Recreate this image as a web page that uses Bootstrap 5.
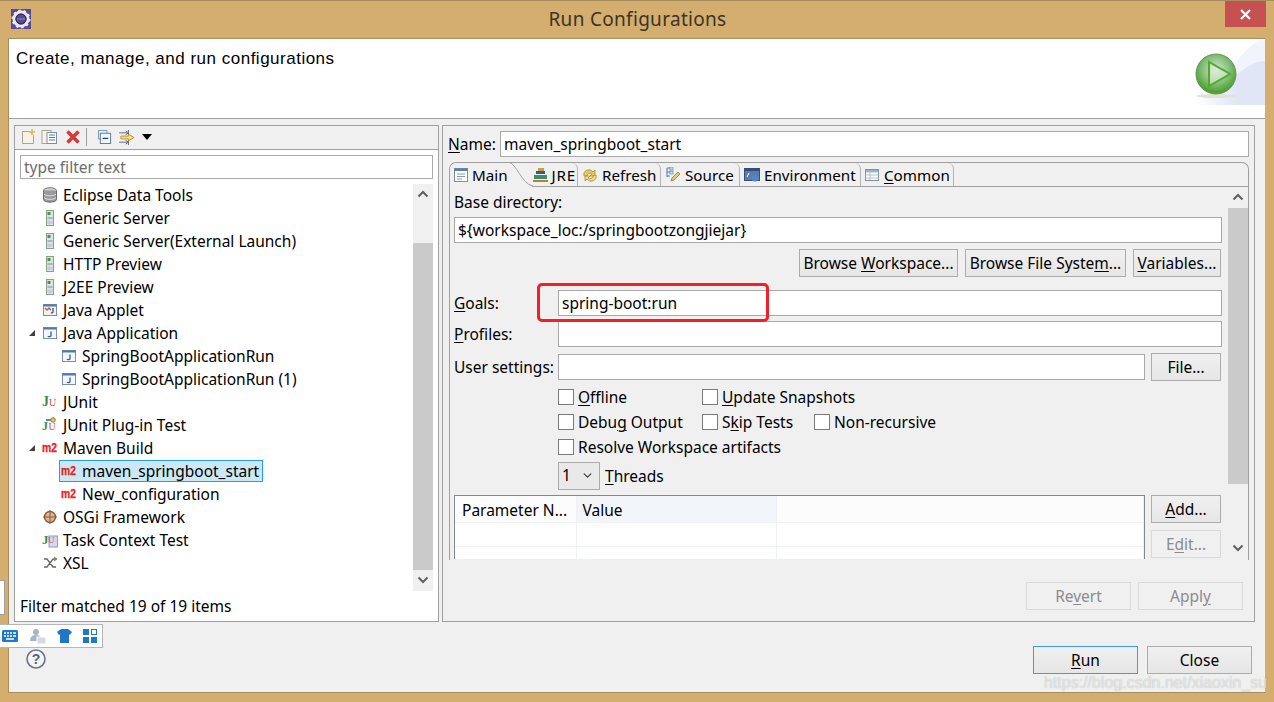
<!DOCTYPE html>
<html lang="en"><head><meta charset="utf-8"><title>Run Configurations</title>
<link href="https://cdn.jsdelivr.net/npm/bootstrap@5.3.0/dist/css/bootstrap.min.css" rel="stylesheet">
<style>
html,body{margin:0;height:702px;overflow:hidden}
body{font-family:"Noto Sans",sans-serif;font-size:15.5px;line-height:20px;color:#000;background:#d4ae6f;position:relative}
u{text-underline-offset:2px;text-decoration-thickness:1px}
.win{height:702px;padding:0 9px 9px 8px;border-top:1px solid #a88d5f}
.titlebar{height:37px;position:relative}
.title-ico{position:absolute;left:3px;top:8px}
.title-txt{font-size:19px;color:#3c3424;width:100%;text-align:center;letter-spacing:.3px;padding-left:2px}
.close-x{position:absolute;right:-1px;top:0;width:41px;height:26px;background:#c75050;display:flex;align-items:center;justify-content:center}
.client{background:#f0f0f0;border:1px solid #a88d5f;border-width:1px 0 1px 1px;height:656px}
.banner{height:80px;background:#fff;border-bottom:1px solid #a0a0a0;position:relative}
.banner-txt{font-family:"Liberation Sans",sans-serif;font-size:17px;letter-spacing:.5px;padding:9px 0 0 7px;line-height:21px}
.banner-art{position:absolute;right:0;top:0}
.panes{padding:6px 10px 0 5px;gap:3px}
.pane-l{width:426px;height:497px;border:1px solid #a0a0a0;background:#fff}
.pane-r{width:813px;height:497px;border:1px solid #a0a0a0;background:#f0f0f0;padding:5px 5px 0 5px}
.tb{height:24px;background:#f0f0f0;border-bottom:1px solid #a0a0a0;padding-left:5px}
.tb svg{display:block}
.tb-dup{margin-left:5px}.tb-del{margin-left:7px}
.tb-sep{display:block;width:1px;height:18px;background:#a0a0a0;margin:0 11px 0 5px}
.tb-flt{margin-left:7px}.tb-tri{margin-left:6px}
.filter-wrap{padding:5px}
.swt-input.form-control{height:26px;min-height:0;border:1px solid #a9a9a9;border-radius:0;padding:0 3px;font-size:15.5px;line-height:24px;color:#000;background:#fff;box-shadow:none}
.filter-wrap .swt-input.form-control{height:24px;color:#6d6d6d}
.tree-box{height:407px}
.tree-list{width:398px}
.tree-row{height:23px;display:flex;align-items:center;white-space:nowrap}
.twist{width:14px;margin-left:13px;height:10px;flex:none;display:flex;align-items:center}
.ti{width:16px;height:16px;margin:0 5px 0 0;flex:none;display:block}
.lvl2{padding-left:46px}
.lvl2s{padding-left:44px}
.sel{display:inline-flex;align-items:center;height:22px;background:#cbe8f6;border:1px solid #26a0da;padding:0 3px 0 1px}
.sb{width:20px;background:#f0f0f0;flex:none}
.sb-arrow{height:21px;display:flex;align-items:center;justify-content:center}
.sb-track{flex:1 1 auto}
.sb-thumb{background:#cacaca}
.sbl-gap{height:38px}.sbl-thumb{height:327px}
.sbr-thumb{height:276px}
.status{padding:5px 0 0 5px}
.name-row{height:26px;margin-bottom:5px}
.name-lbl{width:52px}
.name-in.form-control{width:749px}
.folder{border:1px solid #a0a0a0;border-bottom:0;border-radius:7px 7px 0 0;width:800px;height:398px;margin-left:1px}
.tabs-strip{height:24px;border-bottom:1px solid #a0a0a0;margin:0;flex-wrap:nowrap;padding:0}
.tab-it{display:flex;align-items:center;border-right:1px solid #b4b4b4;border-radius:0 6px 0 0;white-space:nowrap;padding:1px 0 0 4px;font-size:15.2px;color:#000;position:relative;background:#f0f0f0;margin-bottom:-1px;height:23px}
.tab-it svg{margin-right:4px;flex:none}
.tab-main{width:82px;height:24px;border:0;border-radius:7px 0 0 0;padding-left:3px;z-index:1}
.tab-main svg{margin-right:3px}
.tab-it .tab-curve{position:absolute;left:58px;top:-1px;margin:0}
.tab-jre{width:46px;padding-left:0;justify-content:flex-end;padding-right:1px;letter-spacing:.8px}
.tab-jre svg{margin-right:3px}
.tab-ref{width:83px}.tab-src{width:79px}.tab-env{width:121px}.tab-com{width:93px;padding-left:3px}
.tab-body{height:372px;overflow:hidden}
.form-col{width:778px;padding:4px 0 0 4px;flex:none}
.f-base{height:25px;margin-bottom:1px;line-height:22px}
.f-input.form-control{width:768px;margin-bottom:6px}
.f-btns{gap:7px;justify-content:flex-end;width:767px;margin-bottom:13px}
.swt-btn.btn{height:28px;border:1px solid #acacac;border-radius:0;padding:0;font-size:15.5px;line-height:24px;color:#000;background:linear-gradient(#f0f0f0,#e6e6e6);white-space:nowrap}
.swt-btn.btn:disabled{opacity:1;border-color:#d9d9d9;color:#8c8c8c;background:#f0f0f0}
.swt-btn.is-default{border-color:#3c9af0}
.w159{width:159px}.w161{width:161px}.w88{width:88px}.w70{width:70px}.w105{width:105px}
.f-row{height:26px;margin-bottom:5px;width:768px}
.f-lab{width:104px;flex:none}
.f-row .swt-input{flex:1}
.f-user{height:28px;width:767px;margin:6px 0 4px}
.f-user .swt-input.form-control{flex:none;width:587px;margin-right:6px}
.checks{display:grid;grid-template-columns:144px 112px auto;grid-auto-rows:25px;margin-left:104px;height:75px}
.ck{display:flex;align-items:center;white-space:nowrap}
.ck .form-check-input{width:16px;height:16px;margin:0 4px 0 0;border:1px solid #7a7a7a;border-radius:0;flex:none;float:none}
.ck-two{grid-column:2 / 4}
.ck-wide{grid-column:1 / 4}
.f-threads{margin:2px 0 5px 104px;height:28px}
.swt-sel.form-select{width:42px;height:28px;padding:0 0 0 3px;font-size:15.5px;border:1px solid #acacac;border-radius:0;background-color:#e9e9e9;background-position:right 6px center;background-size:11px 9px;color:#000;margin-right:5px}
.f-tbl{gap:6px}
.tbl-clip{width:691px;height:65px;overflow:hidden;border:1px solid #828790;border-bottom:0;background:#fff}
.params{table-layout:fixed;width:689px;margin:0;border-collapse:collapse}
.params th,.params td{height:24px;padding:0;border:0;border-bottom:1px solid #eef2f8;border-right:1px solid #eef2f8;font-weight:400;background:#fff;box-shadow:none}
.params th{height:27px;padding:2px 0 0 7px;background:#fcfcfc;line-height:18px}
.params th.c-val{background:#f2f6fb;padding-left:6px}
.col-a{width:121px}.col-b{width:200px}
.add-col{gap:7px}
.pane-foot{gap:7px;justify-content:flex-end;padding:22px 6px 0 0}
.dlg-foot{justify-content:flex-end;gap:9px;padding:24px 13px 0 0}
.red-box{position:absolute;left:537px;top:283px;width:232px;height:39px;border:3px solid #f0202a;border-radius:5px;pointer-events:none}
.ime-side{position:absolute;left:-1px;top:580px;width:6px;height:35px;background:#fff;border:1px solid #a0a0a0}
.ime{position:absolute;left:-1px;top:624px;width:104px;height:24px;background:#fff;border:1px solid #b4b8be;display:flex;align-items:center;padding-left:2px}
.ime svg{display:block;flex:none}
.ime-a{margin-right:12px}.ime-b{margin-right:11px}.ime-c{margin-right:11px}
.help{position:absolute;left:26px;top:649px}
.wmark{position:absolute;left:1044px;top:672px;font-family:"Liberation Sans",sans-serif;font-size:16px;line-height:22px;color:rgba(255,255,255,.6);text-shadow:0 0 1px rgba(120,120,120,.55);white-space:nowrap}
</style></head><body>
<svg width="0" height="0" class="d-none"><defs>
<symbol id="srv" viewBox="0 0 16 16"><rect x="4.500" y="0.500" width="7" height="15" fill="#dfe3e0" stroke="#8f9c8c"/><rect x="5.500" y="2" width="3" height="3" fill="#3f9a46"/><rect x="5.500" y="7" width="5" height="2" fill="#a8b4c8"/><rect x="5.500" y="10.500" width="5" height="3.500" fill="#c4cede"/></symbol>
<symbol id="japp" viewBox="0 0 16 16"><rect x="1.500" y="2.500" width="13" height="11" fill="#f4f6fb" stroke="#7f8ea8"/><rect x="1.500" y="2.500" width="13" height="2" fill="#4f78b0"/><path d="M9 6.500v4c0 1.500-2.500 1.500-3 .5" fill="none" stroke="#2f5ea8" stroke-width="1.300"/></symbol>
<symbol id="m2" viewBox="0 0 16 16"><text x="0" y="12" font-family="Liberation Sans" font-weight="700" font-size="13" fill="#ee1c25" stroke="#ee1c25" stroke-width=".3" textLength="15" lengthAdjust="spacingAndGlyphs">m2</text></symbol>
<symbol id="chevu" viewBox="0 0 12 8"><path d="M1.500 6.500 6 2l4.500 4.500" fill="none" stroke="#606060" stroke-width="2"/></symbol>
<symbol id="chevd" viewBox="0 0 12 8"><path d="M1.500 1.500 6 6l4.500-4.500" fill="none" stroke="#606060" stroke-width="2"/></symbol>
<symbol id="tw" viewBox="0 0 8 8"><path d="M7 1v6H1z" fill="#404040"/></symbol>
</defs></svg>

<div class="win d-flex flex-column">
  <div class="titlebar d-flex align-items-center">
    <svg class="title-ico" width="20" height="20" viewBox="0 0 20 20"><rect width="20" height="20" fill="#5b4a8f"/><circle cx="10" cy="10" r="7" fill="none" stroke="#e9e9ef" stroke-width="3"/><circle cx="10" cy="10" r="8.500" fill="none" stroke="#e9e9ef" stroke-width="2" stroke-dasharray="2.500 2.800"/><path d="M4.500 10h11" stroke="#6f6ca8" stroke-width="2"/><circle cx="10" cy="10" r="5" fill="none" stroke="#2b2550" stroke-width="1"/></svg>
    <div class="title-txt">Run Configurations</div>
    <div class="close-x"><svg width="13" height="11" viewBox="0 0 13 11"><path d="M2 1l9 9M11 1l-9 9" stroke="#fff" stroke-width="2.200"/></svg></div>
  </div>
  <div class="client d-flex flex-column">
    <div class="banner">
      <div class="banner-txt">Create, manage, and run configurations</div>
      <svg class="banner-art" width="76" height="66" viewBox="0 0 76 66"><defs><linearGradient id="fade" x1="0" x2="1" y1="0" y2="0"><stop offset="0" stop-color="#fff"/><stop offset=".6" stop-color="#e0e6f6"/></linearGradient><radialGradient id="ball" cx=".5" cy=".4" r=".6"><stop offset="0" stop-color="#d6e8d2"/><stop offset=".55" stop-color="#89c07f"/><stop offset=".85" stop-color="#57a83d"/><stop offset="1" stop-color="#4a9a2c"/></radialGradient></defs><path d="M76 0C50 6 44 40 6 66h70z" fill="#f1f4fb"/><path d="M76 22C58 22 44 42 6 66h70z" fill="url(#fade)"/><ellipse cx="27" cy="57" rx="20" ry="2" fill="#e2e2dc"/><circle cx="27" cy="35" r="20" fill="url(#ball)" stroke="#6f9360" stroke-width="1"/><path d="M20 23v24l21-12z" fill="#dcefd6" fill-opacity=".6" stroke="#54a82e" stroke-width="2"/></svg>
    </div>
    <div class="panes d-flex">
      <div class="pane-l d-flex flex-column">
        <div class="tb d-flex align-items-center">
          <svg width="16" height="16" viewBox="0 0 16 16"><path d="M2.500 2.500h7l4 4v8h-11z" fill="#f6f2e4" stroke="#a7a696"/><path d="M12 0v6M9 3h6" stroke="#e6b84a" stroke-width="1.500"/></svg>
          <svg class="tb-dup" width="17" height="16" viewBox="0 0 17 16"><rect x="1" y="1.500" width="9" height="13" fill="#f6f2e4" stroke="#a7a696"/><rect x="6" y="3.500" width="9.500" height="11" fill="#fff" stroke="#7f8ea8"/><path d="M8 6h6M8 8.500h6M8 11h6" stroke="#4f78b0"/></svg>
          <svg class="tb-del" width="16" height="16" viewBox="0 0 16 16"><path d="M2.500 2.500l11 11M13.500 2.500l-11 11" stroke="#d9383a" stroke-width="3.600"/></svg>
          <span class="tb-sep"></span>
          <svg width="14" height="14" viewBox="0 0 15 15"><rect x="0.500" y="0.500" width="9" height="9" fill="#e8eef6" stroke="#7f9ab8"/><rect x="2.500" y="3.500" width="11" height="11" fill="#f3f6fb" stroke="#4f78a0"/><path d="M5 9h6" stroke="#1f4f80" stroke-width="1.400"/></svg>
          <svg class="tb-flt" width="17" height="15" viewBox="0 0 18 16"><path d="M0 3h9M0 13h9M10 0v6M10 10v6M7 1l3 2-3 2M7 11l3 2-3 2" fill="none" stroke="#4f6a88"/><path d="M2 6.500h8v-2l6 3.500-6 3.500v-2h-8z" fill="#f7df9a" stroke="#c98a1c"/></svg>
          <svg class="tb-tri" width="10" height="6" viewBox="0 0 10 6"><path d="M0 0h10L5 6z" fill="#000"/></svg>
        </div>
        <div class="filter-wrap"><input class="form-control swt-input" value="type filter text"></div>
        <div class="tree-box d-flex">
          <div class="tree-list">
            <div class="tree-row"><span class="twist"></span><svg class="ti" viewBox="0 0 16 16"><ellipse cx="8" cy="3.500" rx="6.500" ry="2.800" fill="#c8d0c8" stroke="#777"/><path d="M1.500 3.500v9c0 3.500 13 3.500 13 0v-9" fill="#9a9a9a" stroke="#6a6a6a"/><path d="M2 7c2 2.500 10 2.500 12 0M2 10.500c2 2.500 10 2.500 12 0" fill="none" stroke="#e2e2e2"/></svg>Eclipse Data Tools</div>
            <div class="tree-row"><span class="twist"></span><svg class="ti"><use href="#srv"/></svg>Generic Server</div>
            <div class="tree-row"><span class="twist"></span><svg class="ti"><use href="#srv"/></svg>Generic Server(External Launch)</div>
            <div class="tree-row"><span class="twist"></span><svg class="ti"><use href="#srv"/></svg>HTTP Preview</div>
            <div class="tree-row"><span class="twist"></span><svg class="ti"><use href="#srv"/></svg>J2EE Preview</div>
            <div class="tree-row"><span class="twist"></span><svg class="ti" viewBox="0 0 16 16"><rect x="1.500" y="2.500" width="13" height="11" fill="#f2f2f6" stroke="#7f8ea8"/><rect x="1.500" y="2.500" width="13" height="2" fill="#4f78b0"/><path d="M3 6l2 2 2-2 2 2" fill="none" stroke="#a8702a" stroke-width="1.500"/><path d="M11 6v4c0 1-1.500 1-2 .5" fill="none" stroke="#2f5ea8" stroke-width="1.300"/></svg>Java Applet</div>
            <div class="tree-row"><span class="twist"><svg width="8" height="8"><use href="#tw"/></svg></span><svg class="ti"><use href="#japp"/></svg>Java Application</div>
            <div class="tree-row lvl2"><svg class="ti"><use href="#japp"/></svg>SpringBootApplicationRun</div>
            <div class="tree-row lvl2"><svg class="ti"><use href="#japp"/></svg>SpringBootApplicationRun (1)</div>
            <div class="tree-row"><span class="twist"></span><svg class="ti" viewBox="0 0 16 16"><text x="0" y="12" font-family="Liberation Serif" font-weight="700" font-size="14" fill="#3b8a55">J</text><text x="7" y="12" font-family="Liberation Serif" font-size="10" fill="#d8473f">U</text></svg>JUnit</div>
            <div class="tree-row"><span class="twist"></span><svg class="ti" viewBox="0 0 16 16"><path d="M4 3h6" stroke="#5b86c0" stroke-width="2"/><circle cx="11" cy="3" r="2.300" fill="#e8c868" stroke="#8a7a3a"/><text x="0" y="13" font-family="Liberation Serif" font-weight="700" font-size="12" fill="#3b8a55">J</text><text x="6.500" y="13" font-family="Liberation Serif" font-size="10" fill="#d8473f">U</text></svg>JUnit Plug-in Test</div>
            <div class="tree-row"><span class="twist"><svg width="8" height="8"><use href="#tw"/></svg></span><svg class="ti"><use href="#m2"/></svg>Maven Build</div>
            <div class="tree-row lvl2s"><span class="sel"><svg class="ti"><use href="#m2"/></svg>maven_springboot_start</span></div>
            <div class="tree-row lvl2"><svg class="ti"><use href="#m2"/></svg>New_configuration</div>
            <div class="tree-row"><span class="twist"></span><svg class="ti" viewBox="0 0 16 16"><circle cx="8" cy="8" r="5.500" fill="#d8b898" stroke="#8a5a3a" stroke-width="1.400"/><path d="M8 1v14M1 8h14" stroke="#8a5a3a"/></svg>OSGi Framework</div>
            <div class="tree-row"><span class="twist"></span><svg class="ti" viewBox="0 0 16 16"><rect x="7" y="4" width="8.500" height="11" fill="#d9d6ec" stroke="#9a94c4"/><text x="0" y="12" font-family="Liberation Serif" font-weight="700" font-size="13" fill="#3b8a55">J</text><text x="6" y="11" font-family="Liberation Serif" font-size="9" fill="#d8473f">U</text></svg>Task Context Test</div>
            <div class="tree-row"><span class="twist"></span><svg class="ti" viewBox="0 0 16 16"><path d="M2 4h3l6 8h3M2 12h3l6-8h3" fill="none" stroke="#666" stroke-width="1.300"/><path d="M12 2l3 2-3 2" fill="none" stroke="#6a8a3a"/></svg>XSL</div>
          </div>
          <div class="sb d-flex flex-column">
            <div class="sb-arrow"><svg width="12" height="8"><use href="#chevu"/></svg></div>
            <div class="sbl-gap"></div><div class="sb-thumb sbl-thumb"></div>
            <div class="sb-arrow"><svg width="12" height="8"><use href="#chevd"/></svg></div>
          </div>
        </div>
        <div class="status">Filter matched 19 of 19 items</div>
      </div>
      <div class="pane-r">
        <div class="name-row d-flex align-items-center">
          <label class="name-lbl"><u>N</u>ame:</label>
          <input class="form-control swt-input name-in" value="maven_springboot_start">
        </div>
        <div class="folder d-flex flex-column">
          <div class="tabs-strip nav">
            <div class="tab-it tab-main"><svg width="16" height="16" viewBox="0 0 16 16"><rect x="1.500" y="1.500" width="13" height="13" fill="#fff" stroke="#7f8ea8"/><rect x="1.500" y="1.500" width="13" height="2.500" fill="#5a7fae"/><path d="M4 7h8M4 9.500h8M4 12h5" stroke="#8a9ab0"/></svg>Main<svg class="tab-curve" width="26" height="25" viewBox="0 0 26 25"><path d="M0 0C9 1 13 22 25 24" fill="none" stroke="#a0a0a0"/></svg></div>
            <div class="tab-it tab-jre"><svg width="17" height="16" viewBox="0 0 17 16"><path d="M1 13h15v2H1z" fill="#b5813a"/><path d="M2 8h13v4H2z" fill="#3f8a70"/><path d="M4 4h9v3H4z" fill="#2f5f90"/><path d="M6 1h6v3H6z" fill="#c9a23a"/></svg>JRE</div>
            <div class="tab-it tab-ref"><svg width="16" height="16" viewBox="0 0 16 16"><path d="M2 9a5 5 0 0 1 9-4l2-2v6H8l2-2a3 3 0 0 0-5 2z" fill="#e9c85a" stroke="#b58a2a" stroke-width=".8"/><path d="M14 8a5 5 0 0 1-9 4l-2 2V9h5l-2 2a3 3 0 0 0 5-2z" fill="#f0d98a" stroke="#b58a2a" stroke-width=".8"/></svg>Refresh</div>
            <div class="tab-it tab-src"><svg width="16" height="16" viewBox="0 0 16 16"><path d="M2 1h3M2 1v9M2 5h3M2 9h3" fill="none" stroke="#4f78b0"/><rect x="5" y="0" width="3" height="3" fill="#d0def0" stroke="#4f78b0" stroke-width=".6"/><rect x="5" y="4" width="3" height="3" fill="#d0def0" stroke="#4f78b0" stroke-width=".6"/><path d="M6 14l1-3 6-6 2 2-6 6z" fill="#e9c878" stroke="#a88848"/></svg>Source</div>
            <div class="tab-it tab-env"><svg width="16" height="16" viewBox="0 0 16 16"><rect x="0.500" y="1.500" width="15" height="12" fill="#5b7ca8" stroke="#34507a"/><rect x="0.500" y="1.500" width="15" height="2.500" fill="#2f4f7a"/><path d="M3 10l2-4" stroke="#fff"/><circle cx="11" cy="11" r="3.500" fill="#4f86c8"/></svg>Environment</div>
            <div class="tab-it tab-com"><svg width="16" height="16" viewBox="0 0 16 16"><rect x="1.500" y="2.500" width="13" height="11" fill="#fff" stroke="#7f8ea8"/><path d="M1.500 5h13M1.500 8h13M1.500 11h13M6 5v8" stroke="#b4bed0"/><rect x="2" y="3" width="12" height="2" fill="#9fb2cc"/></svg><u>C</u>ommon</div>
          </div>
          <div class="tab-body d-flex">
            <div class="form-col">
              <div class="f-base">Base directory:</div>
              <input class="form-control swt-input f-input" value="${workspace_loc:/springbootzongjiejar}">
              <div class="f-btns d-flex">
                <button class="btn swt-btn w159" type="button">Browse <u>W</u>orkspace...</button>
                <button class="btn swt-btn w161" type="button">Browse File Syste<u>m</u>...</button>
                <button class="btn swt-btn w88" type="button"><u>V</u>ariables...</button>
              </div>
              <div class="f-row d-flex align-items-center"><span class="f-lab"><u>G</u>oals:</span><input class="form-control swt-input" value="spring-boot:run"></div>
              <div class="f-row d-flex align-items-center"><span class="f-lab"><u>P</u>rofiles:</span><input class="form-control swt-input"></div>
              <div class="f-user d-flex align-items-center"><span class="f-lab">User settings:</span><input class="form-control swt-input"><button class="btn swt-btn w70" type="button">File...</button></div>
              <div class="checks">
                <label class="ck"><input class="form-check-input" type="checkbox"><span><u>O</u>ffline</span></label>
                <label class="ck ck-two"><input class="form-check-input" type="checkbox"><span><u>U</u>pdate Snapshots</span></label>
                <label class="ck"><input class="form-check-input" type="checkbox"><span>Debu<u>g</u> Output</span></label>
                <label class="ck"><input class="form-check-input" type="checkbox"><span>S<u>k</u>ip Tests</span></label>
                <label class="ck"><input class="form-check-input" type="checkbox"><span>Non-recursive</span></label>
                <label class="ck ck-wide"><input class="form-check-input" type="checkbox"><span>Resolve Workspace artifacts</span></label>
              </div>
              <div class="f-threads d-flex align-items-center"><select class="form-select swt-sel"><option>1</option></select><span><u>T</u>hreads</span></div>
              <div class="f-tbl d-flex">
                <div class="tbl-clip"><table class="params"><colgroup><col class="col-a"><col class="col-b"><col></colgroup><thead><tr><th>Parameter N...</th><th class="c-val">Value</th><th></th></tr></thead><tbody><tr><td></td><td></td><td></td></tr><tr><td></td><td></td><td></td></tr></tbody></table></div>
                <div class="add-col d-flex flex-column"><button class="btn swt-btn w70" type="button"><u>A</u>dd...</button><button class="btn swt-btn w70" type="button" disabled>E<u>d</u>it...</button></div>
              </div>
            </div>
            <div class="sb d-flex flex-column">
              <div class="sb-arrow"><svg width="12" height="8"><use href="#chevu"/></svg></div>
              <div class="sb-thumb sbr-thumb"></div>
              <div class="sb-track"></div>
              <div class="sb-arrow"><svg width="12" height="8"><use href="#chevd"/></svg></div>
            </div>
          </div>
        </div>
        <div class="pane-foot d-flex">
          <button class="btn swt-btn w105" type="button" disabled>Re<u>v</u>ert</button>
          <button class="btn swt-btn w105" type="button" disabled>Appl<u>y</u></button>
        </div>
      </div>
    </div>
    <div class="dlg-foot d-flex">
      <button class="btn swt-btn w105 is-default" type="button"><u>R</u>un</button>
      <button class="btn swt-btn w105" type="button">Close</button>
    </div>
  </div>
</div>

<div class="red-box"></div>
<div class="ime-side"></div>
<div class="ime">
  <svg class="ime-a" width="16" height="12" viewBox="0 0 16 12"><rect width="16" height="12" rx="1.500" fill="#1f77c8"/><path d="M2 3h2M5 3h2M8 3h2M11 3h3M2 6h2M5 6h2M8 6h2M11 6h3M4 9h8" stroke="#fff" stroke-width="1.300"/></svg>
  <svg class="ime-b" width="16" height="16" viewBox="0 0 16 16"><circle cx="6" cy="4" r="3" fill="#a9b4c0"/><path d="M0 13c0-5 3-6 6-6s5 1 5 3v3z" fill="#a9b4c0"/><rect x="7" y="9" width="9" height="7" fill="#d5dbe2" stroke="#fff"/></svg>
  <svg class="ime-c" width="15" height="14" viewBox="0 0 15 14"><path d="M4 0h7l4 3-2 3-1-.700V14H3V5.300L2 6 0 3z" fill="#1f77c8"/></svg>
  <svg width="14" height="14" viewBox="0 0 14 14"><rect width="6" height="6" fill="#1f77c8"/><rect x="8.500" y="0.500" width="5" height="5" fill="none" stroke="#1f77c8"/><rect y="8" width="6" height="6" fill="#1f77c8"/><rect x="8" y="8" width="6" height="6" fill="#1f77c8"/></svg>
</div>
<svg class="help" width="20" height="20" viewBox="0 0 20 20"><circle cx="10" cy="10" r="9" fill="#f4f4f6" stroke="#66758f" stroke-width="1.600"/><text x="10" y="15" text-anchor="middle" font-family="Liberation Sans" font-weight="700" font-size="14" fill="#55607a">?</text></svg>
<div class="wmark">https://blog.csdn.net/xiaoxin_su</div>
<script src="https://cdn.jsdelivr.net/npm/bootstrap@5.3.0/dist/js/bootstrap.bundle.min.js"></script>
</body></html>
